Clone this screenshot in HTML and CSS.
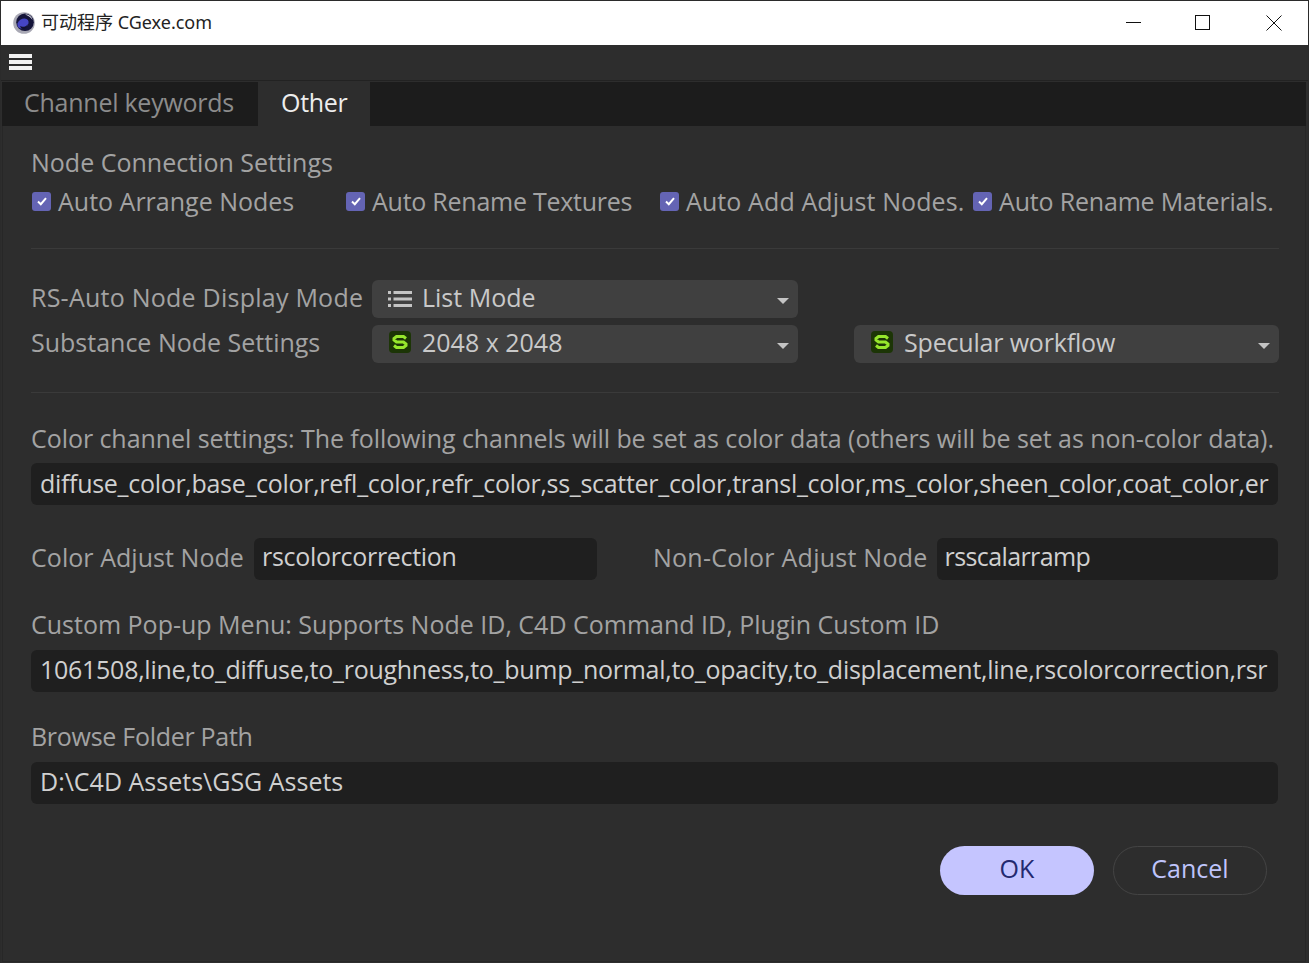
FILE: index.html
```html
<!DOCTYPE html>
<html>

<head>
    <meta name="viewport" content="width=device-width, initial-scale=1.0">
    <link rel="stylesheet" href="styles.css">
    <title>可动程序 CGexe.com</title>
</head>

<body>
    <div class="window">
        <div class="titlebar">
            <svg class="app-icon" width="22" height="22" viewBox="0 0 22 22">
                <circle cx="11" cy="11" r="10.800" fill="#a8a8b4" />
                <circle cx="12" cy="10.300" r="8.800" fill="#15153a" />
                <ellipse cx="10" cy="11.500" rx="6" ry="4.600" transform="rotate(-35 10 11.500)" fill="#4545c4" />
                <path d="M12 2.500c3.500-.5 7 2 7.500 5.500-1.500-2.500-4-4.500-7.500-5.500z" fill="#e8e8f0" />
                <path d="M7 14c2 1.500 6 1 8-2-1 3-2.500 5-5 5-1.500 0-2.500-1.500-3-3z" fill="#12122e" />
            </svg>
            <span class="title">可动程序 CGexe.com</span>
            <div class="win-buttons">
                <svg width="16" height="16" viewBox="0 0 16 16"><path d="M0 7.500h15" stroke="#111" fill="none" /></svg>
                <svg width="16" height="16" viewBox="0 0 16 16"><rect x="0.500" y="0.500" width="14" height="14" stroke="#111" fill="none" /></svg>
                <svg class="win-close" width="16" height="16" viewBox="0 0 16 16"><path d="M0.500 0.500l15 15M15.500 0.500l-15 15" stroke="#111" fill="none" /></svg>
            </div>
        </div>

        <div class="menubar">
            <div class="burger"><span></span><span></span><span></span></div>
        </div>

        <div class="tabs">
            <div class="tab tab-channel">Channel keywords</div>
            <div class="tab active">Other</div>
        </div>

        <div class="content">
            <div class="label">Node Connection Settings</div>
            <div class="checks">
                <div class="check check-1"><span class="box"><svg width="12" height="12" viewBox="0 0 12 12"><path d="M2 6.500l2.800 2.700L10 3.200" /></svg></span>Auto Arrange Nodes</div>
                <div class="check check-2"><span class="box"><svg width="12" height="12" viewBox="0 0 12 12"><path d="M2 6.500l2.800 2.700L10 3.200" /></svg></span>Auto Rename Textures</div>
                <div class="check check-3"><span class="box"><svg width="12" height="12" viewBox="0 0 12 12"><path d="M2 6.500l2.800 2.700L10 3.200" /></svg></span>Auto Add Adjust Nodes.</div>
                <div class="check check-4"><span class="box"><svg width="12" height="12" viewBox="0 0 12 12"><path d="M2 6.500l2.800 2.700L10 3.200" /></svg></span>Auto Rename Materials.</div>
            </div>

            <div class="divider first"></div>

            <div class="combo-row">
                <div class="label combo-label rs-label">RS-Auto Node Display Mode</div>
                <div class="combo">
                    <svg class="combo-icon list-icon" width="24" height="20" viewBox="0 0 24 20">
                        <path d="M0 2h3v3H0zM0 8.500h3v3H0zM0 15h3v3H0zM5.500 2H24v3H5.500zM5.500 8.500H24v3H5.500zM5.500 15H24v3H5.500z" fill="#c4c4c4" />
                    </svg>
                    <span>List Mode</span>
                    <i class="arrow"></i>
                </div>
            </div>
            <div class="combo-row second">
                <div class="label combo-label">Substance Node Settings</div>
                <div class="combo">
                    <svg class="combo-icon" width="24" height="24" viewBox="0 0 24 24">
                        <rect x="1" y="1" width="22" height="22" rx="4" fill="#1c3506" />
                        <path d="M18 8.500L15.500 6.500H8.500L6 8.500V10L8.500 12h7l2.500 2v1.500l-2.500 2h-7L6 15.500" fill="none" stroke="#96e62c" stroke-width="3" />
                    </svg>
                    <span>2048 x 2048</span>
                    <i class="arrow"></i>
                </div>
                <div class="combo combo-right">
                    <svg class="combo-icon" width="24" height="24" viewBox="0 0 24 24">
                        <rect x="1" y="1" width="22" height="22" rx="4" fill="#1c3506" />
                        <path d="M18 8.500L15.500 6.500H8.500L6 8.500V10L8.500 12h7l2.500 2v1.500l-2.500 2h-7L6 15.500" fill="none" stroke="#96e62c" stroke-width="3" />
                    </svg>
                    <span class="specular">Specular workflow</span>
                    <i class="arrow"></i>
                </div>
            </div>

            <div class="divider second-line"></div>

            <div class="label wide">Color channel settings: The following channels will be set as color data (others will be set as non-color data).</div>
            <div class="field long-a">diffuse_color,base_color,refl_color,refr_color,ss_scatter_color,transl_color,ms_color,sheen_color,coat_color,er</div>

            <div class="adjust-row">
                <div class="label color-adjust">Color Adjust Node</div>
                <div class="field short">rscolorcorrection</div>
                <div class="label non-color">Non-Color Adjust Node</div>
                <div class="field short grow">rsscalarramp</div>
            </div>

            <div class="label block-label">Custom Pop-up Menu: Supports Node ID, C4D Command ID, Plugin Custom ID</div>
            <div class="field long-b">1061508,line,to_diffuse,to_roughness,to_bump_normal,to_opacity,to_displacement,line,rscolorcorrection,rsr</div>

            <div class="label block-label browse-label">Browse Folder Path</div>
            <div class="field path-field">D:\C4D Assets\GSG Assets</div>

            <div class="buttons">
                <button class="btn btn-ok">OK</button>
                <button class="btn btn-cancel">Cancel</button>
            </div>
        </div>
    </div>
</body>

</html>
```

FILE: styles.css
```css
html,
body {
    margin: 0;
    padding: 0;
    background-color: #2b2b2b;
}

.window {
    width: 1309px;
    height: 963px;
    box-sizing: border-box;
    border: 1px solid #2b2b2b;
    border-bottom: 0;
    background-color: #2d2d2d;
    font-family: "Open Sans", "Noto Sans", sans-serif;
    font-size: 25px;
    color: #a3a3a3;
    overflow: hidden;
    display: flex;
    flex-direction: column;
}

.titlebar {
    height: 44px;
    flex: none;
    background-color: #fff;
    display: flex;
    align-items: center;
    padding-left: 12px;
}

.app-icon {
    margin-right: 6px;
}

.title {
    font-family: "Noto Sans", "Noto Sans CJK SC", sans-serif;
    font-size: 18px;
    color: #222;
    padding-bottom: 4px;
}

.win-buttons {
    margin-left: auto;
    display: flex;
    gap: 53px;
    margin-right: 26px;
}

.win-close {
    margin-left: 2px;
}

.menubar {
    height: 33px;
    flex: none;
    padding-bottom: 2px;
    background-color: #2d2d2d;
    border-bottom: 1px solid #222;
    display: flex;
    align-items: center;
    padding-left: 8px;
}

.burger {
    width: 23px;
    display: flex;
    flex-direction: column;
    gap: 2px;
}

.burger span {
    display: block;
    height: 4px;
    background-color: #f2f2f2;
}

.tabs {
    height: 44px;
    flex: none;
    margin: 1px 2px 0 1px;
    background-color: #1c1c1c;
    display: flex;
}

.tab {
    width: 256px;
    box-sizing: border-box;
    padding-left: 22px;
    line-height: 41px;
    color: #8c8c8c;
}

.tab-channel {
    letter-spacing: -0.25px;
}

.tab.active {
    width: 112px;
    padding-left: 23px;
    letter-spacing: -0.3px;
    color: #ededed;
    background-color: #2d2d2d;
}

.content {
    flex: 1;
    margin: 0 2px 1px 1px;
    padding: 19px 26px 0 28px;
    border: 1px solid #272727;
    border-top: 0;
}

.label {
    line-height: 34px;
    margin-bottom: 2px;
    white-space: nowrap;
}

.checks {
    display: flex;
    margin-top: 5px;
}

.check {
    display: flex;
    align-items: center;
    line-height: 34px;
    padding-bottom: 2px;
    white-space: nowrap;
}

.check-1 {
    width: 314px;
}

.check-2 {
    width: 314px;
    letter-spacing: -0.25px;
}

.check-3 {
    width: 313px;
    letter-spacing: 0.1px;
}

.check-4 {
    letter-spacing: -0.18px;
}

.box {
    width: 19px;
    height: 19px;
    margin-left: 1px;
    margin-right: 7px;
    border-radius: 3px;
    background-color: #6464b4;
    display: flex;
    align-items: center;
    justify-content: center;
}

.box path {
    fill: none;
    stroke: #fff;
    stroke-width: 2;
}

.divider {
    height: 1px;
    background-color: #3a3a3a;
}

.divider.first {
    margin-top: 28px;
    margin-bottom: 31px;
}

.divider.second-line {
    margin-top: 29px;
    margin-bottom: 28px;
}

.combo-row {
    display: flex;
    align-items: center;
    height: 38px;
}

.combo-row.second {
    margin-top: 7px;
}

.combo-label {
    width: 341px;
    margin-bottom: 4px;
}

.rs-label {
    letter-spacing: 0.24px;
}

.combo {
    width: 426px;
    height: 38px;
    box-sizing: border-box;
    border-radius: 6px;
    background-color: #404040;
    display: flex;
    align-items: center;
    padding-left: 16px;
    padding-bottom: 4px;
    color: #c9c9c9;
    position: relative;
}

.combo-right {
    width: 425px;
    margin-left: 56px;
}

.combo-icon {
    flex: none;
    margin-right: 10px;
}

.list-icon {
    margin-top: 4px;
}

.specular {
    letter-spacing: -0.18px;
}

.arrow {
    position: absolute;
    right: 9px;
    top: 18px;
    width: 0;
    height: 0;
    border-left: 6px solid transparent;
    border-right: 6px solid transparent;
    border-top: 6px solid #c4c4c4;
}

.field {
    height: 42px;
    box-sizing: border-box;
    border-radius: 6px;
    background-color: #1f1f1f;
    color: #d0d0d0;
    line-height: 40px;
    padding-left: 9px;
    white-space: nowrap;
    overflow: hidden;
    margin-right: 1px;
}

.long-a {
    letter-spacing: -0.3px;
}

.long-b {
    letter-spacing: -0.27px;
    line-height: 38px;
}

.path-field {
    line-height: 38px;
}

.wide {
    margin-bottom: 8px;
    letter-spacing: -0.065px;
}

.adjust-row {
    display: flex;
    align-items: center;
    margin-top: 33px;
}

.adjust-row .label {
    margin-bottom: 0;
    padding-bottom: 4px;
}

.color-adjust {
    letter-spacing: 0.05px;
}

.adjust-row .field {
    margin-left: 10px;
    line-height: 37px;
}

.field.short {
    width: 343px;
    padding-left: 8px;
    letter-spacing: -0.3px;
}

.adjust-row .field.grow {
    flex: 1;
    margin-left: 9px;
    padding-left: 8px;
    letter-spacing: -0.6px;
}

.adjust-row .non-color {
    margin-left: 55px;
    letter-spacing: 0.25px;
}

.block-label {
    margin-top: 27px;
    margin-bottom: 9px;
}

.browse-label {
    letter-spacing: -0.28px;
}

.buttons {
    display: flex;
    justify-content: flex-end;
    gap: 19px;
    margin-top: 42px;
    margin-right: 12px;
}

.btn {
    width: 154px;
    height: 49px;
    border-radius: 25px;
    box-sizing: border-box;
    font-family: "Open Sans", "Noto Sans", sans-serif;
    font-size: 25px;
    padding-bottom: 6px;
    cursor: pointer;
}

.btn-ok {
    background-color: #c5c5ff;
    color: #23296f;
    border: none;
}

.btn-cancel {
    background-color: transparent;
    color: #bfc4fb;
    border: 1px solid #444;
}
```
